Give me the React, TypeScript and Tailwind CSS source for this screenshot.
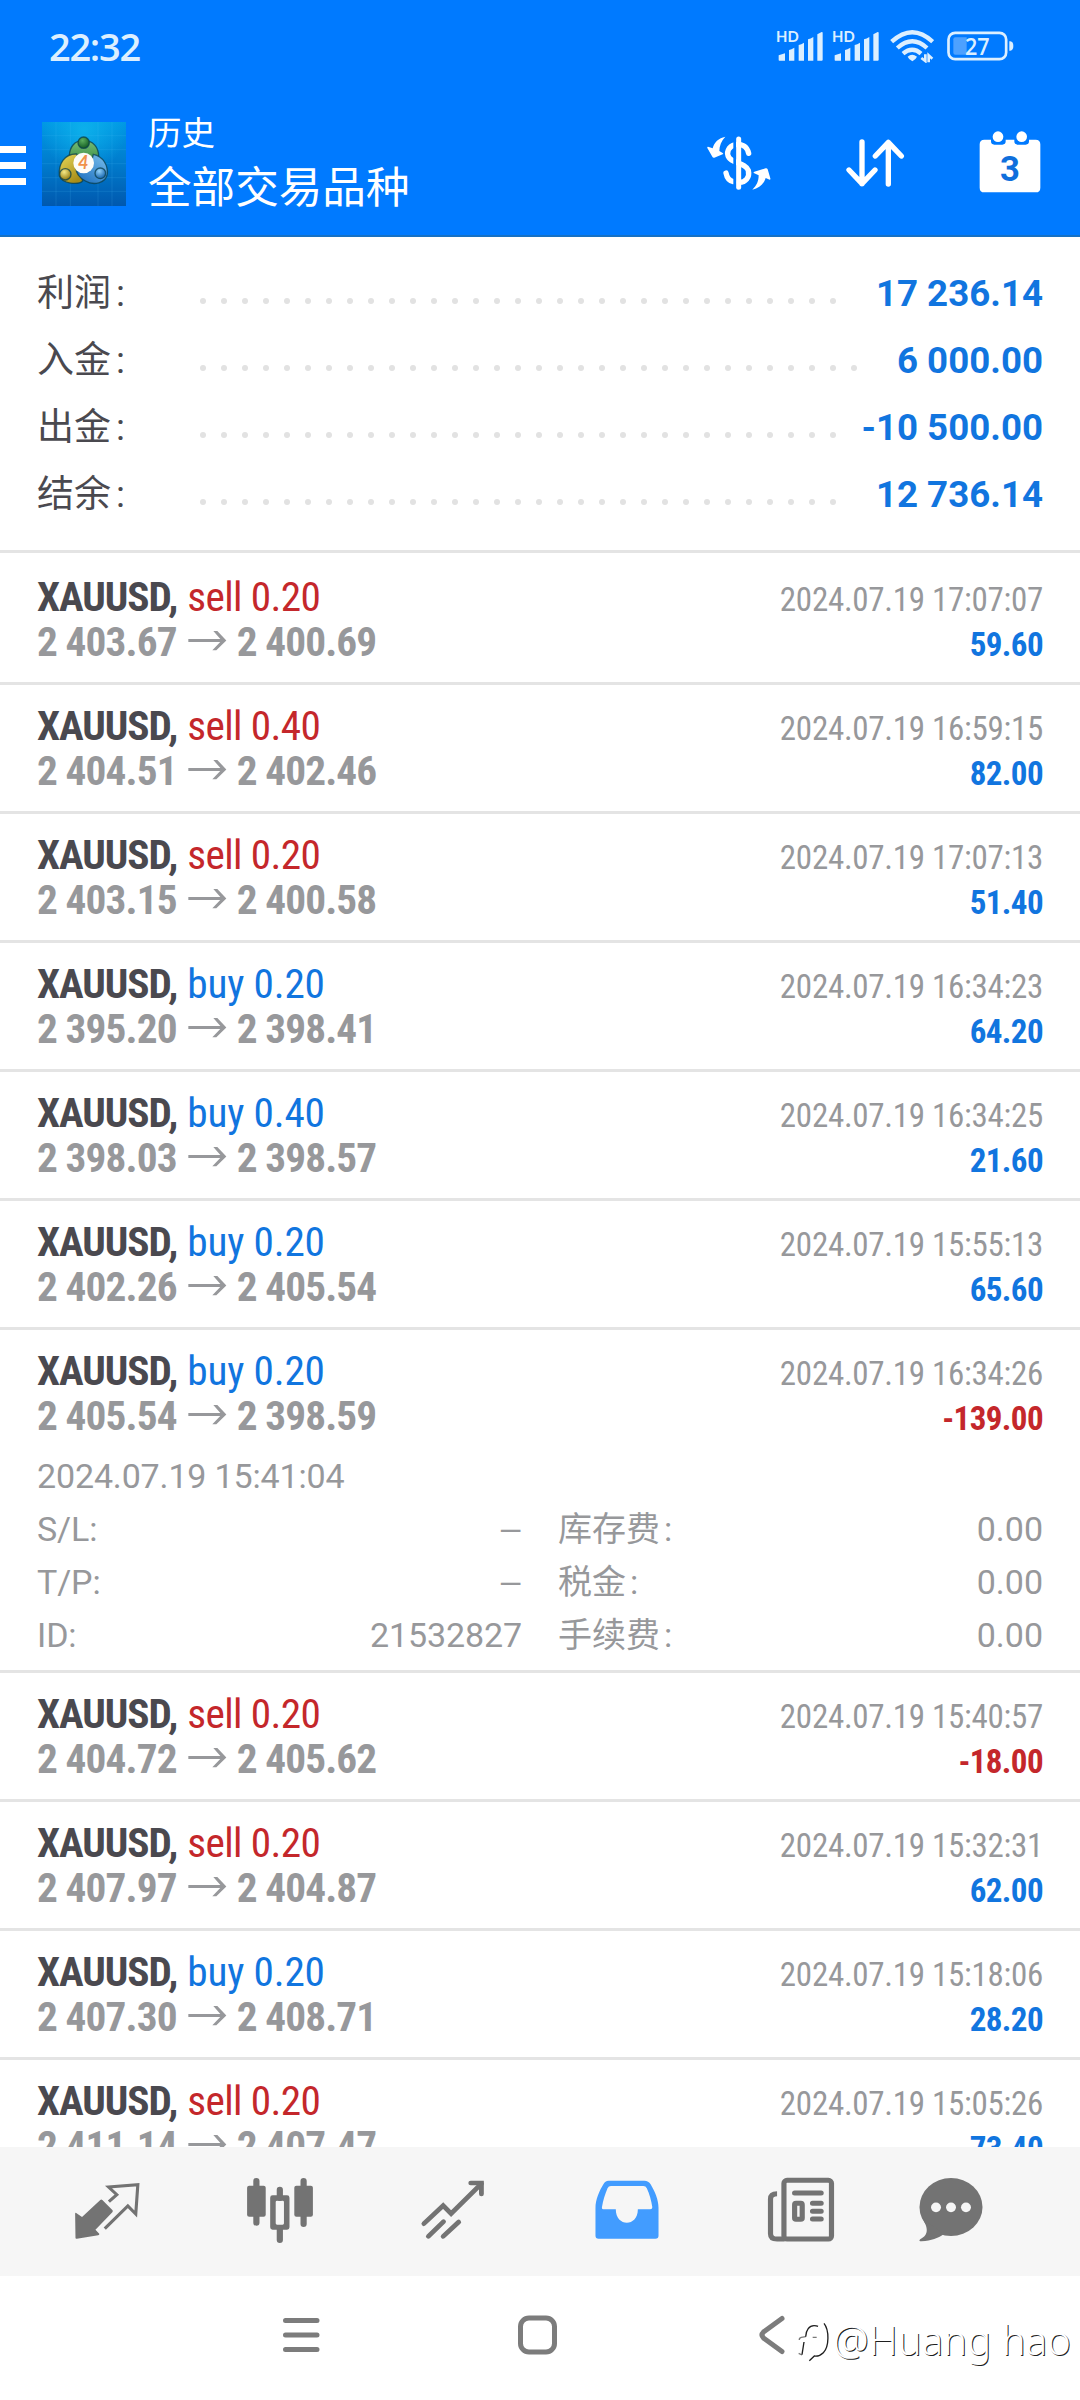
type Trade = {
  side: 'sell' | 'buy';
  volume: string;
  open: string;
  close: string;
  time: string;
  profit: string;
};

const TRADES: Trade[] = [
  { side: 'sell', volume: '0.20', open: '2 403.67', close: '2 400.69', time: '2024.07.19 17:07:07', profit: '59.60' },
  { side: 'sell', volume: '0.40', open: '2 404.51', close: '2 402.46', time: '2024.07.19 16:59:15', profit: '82.00' },
  { side: 'sell', volume: '0.20', open: '2 403.15', close: '2 400.58', time: '2024.07.19 17:07:13', profit: '51.40' },
  { side: 'buy', volume: '0.20', open: '2 395.20', close: '2 398.41', time: '2024.07.19 16:34:23', profit: '64.20' },
  { side: 'buy', volume: '0.40', open: '2 398.03', close: '2 398.57', time: '2024.07.19 16:34:25', profit: '21.60' },
  { side: 'buy', volume: '0.20', open: '2 402.26', close: '2 405.54', time: '2024.07.19 15:55:13', profit: '65.60' },
  { side: 'buy', volume: '0.20', open: '2 405.54', close: '2 398.59', time: '2024.07.19 16:34:26', profit: '-139.00' },
  { side: 'sell', volume: '0.20', open: '2 404.72', close: '2 405.62', time: '2024.07.19 15:40:57', profit: '-18.00' },
  { side: 'sell', volume: '0.20', open: '2 407.97', close: '2 404.87', time: '2024.07.19 15:32:31', profit: '62.00' },
  { side: 'buy', volume: '0.20', open: '2 407.30', close: '2 408.71', time: '2024.07.19 15:18:06', profit: '28.20' },
  { side: 'sell', volume: '0.20', open: '2 411.14', close: '2 407.47', time: '2024.07.19 15:05:26', profit: '73.40' },
];

const EXPANDED = 6;

const SUMMARY = [
  { label: '利润', value: '17 236.14', dots: 31 },
  { label: '入金', value: '6 000.00', dots: 32 },
  { label: '出金', value: '-10 500.00', dots: 31 },
  { label: '结余', value: '12 736.14', dots: 31 },
];

const DETAILS = [
  { key: 'S/L:', value: '—', label: '库存费', amount: '0.00' },
  { key: 'T/P:', value: '—', label: '税金', amount: '0.00' },
  { key: 'ID:', value: '21532827', label: '手续费', amount: '0.00' },
];

function Signal() {
  return (
    <svg className="h-[32px] w-[47px] overflow-visible" viewBox="286 92 141 96" fill="#dcefff">
      <text x="286" y="129" fontSize="45" fontWeight="700" fontFamily="Lato, sans-serif" textLength="68" lengthAdjust="spacingAndGlyphs">HD</text>
      <path d="M294 168 L313 162 V184 H296 Q294 184 294 181Z" />
      <path d="M325 152 Q332 150 341 145 V184 H325Z" />
      <path d="M354 137 Q362 135 370 130 V184 H354Z" />
      <path d="M382 120 Q390 118 398 113 V184 H382Z" />
      <path d="M410 105 Q418 101 423 98 Q426 97 426 101 V181 Q426 184 423 184 H410Z" />
    </svg>
  );
}

function Wifi() {
  return (
    <svg className="h-[34px] w-[44px]" viewBox="629 90 132 102" fill="none" stroke="#dcefff" strokeWidth="13">
      <path d="M634 128 Q696 71 757 128" />
      <path d="M651 147 Q696 107 740 147" />
      <path d="M668 164 Q696 141 722 164" />
      <path d="M682 173 Q695 162 710 173 Q706 182 696 187 Q686 182 682 173Z" fill="#dcefff" stroke="none" />
      <path d="M735 166 V186 L723 177 M745 190 V169 L756 179" strokeWidth="8" />
    </svg>
  );
}

function Battery() {
  return (
    <svg className="h-[30px] w-[67px] overflow-visible" viewBox="801 94 201 90" fill="none">
      <rect x="805.500" y="99.500" width="173" height="79" rx="20" stroke="#dcefff" strokeWidth="8" />
      <path d="M988 125 H991 Q1000 126 1000 139 Q1000 152 991 153 H988Z" fill="#dcefff" />
      <path d="M826 113 H860 V165 H826 Q820 165 820 159 V119 Q820 113 826 113Z" fill="#4da1ff" />
      <text x="855" y="165" fontSize="69" fontWeight="600" fontFamily="'Open Sans', sans-serif" textLength="74" lengthAdjust="spacingAndGlyphs" fill="#dcefff">27</text>
    </svg>
  );
}

function Logo() {
  return (
    <svg className="h-[84px] w-[84px]" viewBox="36 21 252 252">
      <defs>
        <linearGradient id="bg" x1="0" y1="0" x2="0" y2="1">
          <stop offset="0" stopColor="#0099e4" />
          <stop offset="0.5" stopColor="#007bcc" />
          <stop offset="1" stopColor="#0058ae" />
        </linearGradient>
        <radialGradient id="glow" cx="0.5" cy="0.1" r="0.5">
          <stop offset="0" stopColor="#12bcf0" stopOpacity="0.7" />
          <stop offset="1" stopColor="#12bcf0" stopOpacity="0" />
        </radialGradient>
        <linearGradient id="green" x1="0" y1="0" x2="0" y2="1">
          <stop offset="0" stopColor="#76bd76" />
          <stop offset="1" stopColor="#267c34" />
        </linearGradient>
        <linearGradient id="yellow" x1="0" y1="0" x2="0.6" y2="1">
          <stop offset="0" stopColor="#e8da5c" />
          <stop offset="1" stopColor="#a88d18" />
        </linearGradient>
        <linearGradient id="blue" x1="1" y1="0" x2="0.3" y2="1">
          <stop offset="0" stopColor="#7cc1ee" />
          <stop offset="1" stopColor="#2274c2" />
        </linearGradient>
        <radialGradient id="greenBall" cx="0.4" cy="0.3" r="0.7">
          <stop offset="0" stopColor="#5cae5e" />
          <stop offset="1" stopColor="#125c24" />
        </radialGradient>
        <radialGradient id="yellowBall" cx="0.4" cy="0.3" r="0.7">
          <stop offset="0" stopColor="#f5e986" />
          <stop offset="1" stopColor="#957c10" />
        </radialGradient>
        <radialGradient id="blueBall" cx="0.4" cy="0.3" r="0.7">
          <stop offset="0" stopColor="#93d2fa" />
          <stop offset="1" stopColor="#1463ad" />
        </radialGradient>
      </defs>
      <rect x="36" y="21" width="252" height="252" fill="url(#bg)" />
      <rect x="36" y="21" width="252" height="252" fill="url(#glow)" />
      <path d="M36 62 H288 M36 104 H288 M36 146 H288 M36 188 H288 M36 229 H288 M78 21 V273 M121 21 V273 M204 21 V273 M246 21 V273" stroke="#5cc8ff" strokeOpacity="0.22" strokeWidth="2" />
      <g stroke="#0a3f4c" strokeOpacity="0.75" strokeWidth="4">
        <path d="M161 76 C190 76 206 98 206 124 C206 140 198 156 186 164 L134 160 C122 150 117 136 118 122 C119 96 134 76 161 76Z" fill="url(#green)" />
        <path d="M88 182 C85 146 104 116 140 117 L150 160 L158 198 C146 210 96 208 88 182Z" fill="url(#yellow)" />
        <path d="M190 118 C220 124 234 152 232 176 C228 206 190 212 166 198 C148 188 138 172 138 158 L178 166Z" fill="url(#blue)" />
        <circle cx="161" cy="83" r="17" fill="url(#greenBall)" />
        <circle cx="106" cy="178" r="17" fill="url(#yellowBall)" />
        <circle cx="211" cy="175" r="16" fill="url(#blueBall)" />
      </g>
      <circle cx="161" cy="144" r="31" fill="#fdfcf8" />
      <text x="160" y="163" textAnchor="middle" fontSize="54" fontWeight="700" fontStyle="italic" fontFamily="Lato, sans-serif" fill="#f0924a">4</text>
    </svg>
  );
}

function CurrencyIcon() {
  return (
    <svg className="h-[60px] w-[66px]" viewBox="80 400 198 180" fill="#fff">
      <g fill="none" stroke="#fff" strokeWidth="16" strokeLinecap="round">
        <path d="M208 461 C203 438 186 432 168 435 C146 440 140 460 149 474 C158 490 200 490 207 512 C212 534 198 548 180 548" />
        <path d="M140 520 C143 536 152 544 162 546" />
      </g>
      <path d="M166 405 V575" stroke="#007aff" strokeWidth="8" />
      <path d="M178 418 V563" stroke="#fff" strokeWidth="15" strokeLinecap="round" />
      <path d="M138 411 C118 415 104 428 100 446 L86 441 Q83 441 84 445 L99 471 Q101 475 105 474 L130 464 Q134 462 130 460 L120 454 C120 438 126 424 138 411Z" />
      <path d="M219 570 C240 565 254 552 259 535 L271 540 Q274 540 273 536 L265 509 Q263 505 259 506 L225 516 Q220 519 225 521 L238 527 C238 545 232 558 219 570Z" />
    </svg>
  );
}

function SortIcon() {
  return (
    <svg className="h-[50px] w-[60px]" viewBox="496 415 180 150" fill="none" stroke="#fff" strokeWidth="16" strokeLinecap="round" strokeLinejoin="round">
      <path d="M547 427 V552 M508 511 L547 552 L586 511" />
      <path d="M626 553 V428 M587 469 L626 428 L665 469" />
    </svg>
  );
}

function CalendarIcon() {
  return (
    <svg className="h-[62px] w-[62px]" viewBox="898 394 186 186" fill="#fff">
      <path d="M914 420 H934 V425 Q934 435 944 435 H968 Q978 435 978 425 V420 H1004 V425 Q1004 435 1014 435 H1038 Q1048 435 1048 425 V420 H1068 Q1082 420 1082 434 V564 Q1082 578 1068 578 H914 Q900 578 900 564 V434 Q900 420 914 420Z" />
      <circle cx="955" cy="411" r="16" />
      <circle cx="1026" cy="411" r="16" />
      <text x="991" y="544" textAnchor="middle" fontSize="104" fontWeight="700" fontFamily="Roboto, sans-serif" fill="#0f6fdc">3</text>
    </svg>
  );
}

function ArrowRight() {
  return (
    <svg className="ml-[11px] h-[21px] w-[39px] -translate-y-[5px]" viewBox="564 238 117 63" fill="none" stroke="#97989b">
      <path d="M565 269.500 H672" strokeWidth="9" />
      <path d="M640 241 L652 241 L679 269.500 L649 299 L637 299 L665 269.500Z" fill="#97989b" stroke="none" />
    </svg>
  );
}

function TradeRow({ trade }: { trade: Trade }) {
  return (
    <div className="pt-[19px] font-['Roboto_Condensed','Roboto',sans-serif] leading-[45px] text-[#97989b]">
      <div className="flex h-[45px] items-baseline whitespace-pre">
        <span className="text-[41.25px] font-bold tracking-[-1.05px] text-[#4a494f]">XAUUSD,</span>
        {trade.side === 'sell' ? (
          <span className="ml-[10px] text-[41.25px] tracking-[-0.61px] text-[#c4272b]">sell {trade.volume}</span>
        ) : (
          <span className="ml-[10px] text-[41.25px] tracking-[-0.18px] text-[#1175df]">buy {trade.volume}</span>
        )}
        <span className="ml-auto text-[33px] tracking-[-0.28px]">{trade.time}</span>
      </div>
      <div className="flex h-[45px] items-baseline whitespace-pre">
        <span className="text-[41.25px] font-bold tracking-[-0.87px]">{trade.open}</span>
        <ArrowRight />
        <span className="ml-[10px] text-[41.25px] font-bold tracking-[-0.87px]">{trade.close}</span>
        <span
          className={
            trade.profit.startsWith('-')
              ? 'ml-auto text-[33px] font-bold tracking-[-0.6px] text-[#c4272b]'
              : 'ml-auto text-[33px] font-bold tracking-[-0.6px] text-[#1175df]'
          }
        >
          {trade.profit}
        </span>
      </div>
    </div>
  );
}

function TradeDetails() {
  return (
    <div className="mt-[11px] h-[220px] text-[34px] leading-[53px] text-[#97989b]">
      <div className="h-[50px] tracking-[-0.15px]">2024.07.19 15:41:04</div>
      {DETAILS.map((d) => (
        <div key={d.key} className="flex h-[53px] items-baseline">
          <div className="flex w-[485px] items-baseline justify-between tracking-[-0.1px]">
            <span>{d.key}</span>
            <span className={d.value === '—' ? 'text-[30px]' : ''}>{d.value}</span>
          </div>
          <div className="ml-[36px] flex flex-1 items-baseline justify-between">
            <span>
              <span className="font-['Noto_Sans_CJK_SC',sans-serif]">{d.label}</span>
              <span className="ml-[4px]">:</span>
            </span>
            <span>{d.amount}</span>
          </div>
        </div>
      ))}
    </div>
  );
}

function Summary() {
  return (
    <section className="h-[316px] border-b-[3px] border-[#e4e4e4] pt-[20px] pr-[37px] pl-[37px]">
      {SUMMARY.map((s) => (
        <div key={s.label} className="flex h-[67px] items-baseline leading-[67px]">
          <span className="w-[162px] text-[37px] text-[#4a494f]">
            <span className="font-['Noto_Sans_CJK_SC',sans-serif]">{s.label}</span>
            <span className="ml-[5px]">:</span>
          </span>
          <span className="ml-[1px] flex -translate-y-[2px] gap-[15px]">
            {Array.from({ length: s.dots }, (_, i) => (
              <i key={i} className="block size-[6px] rounded-full bg-[#e2e2e2]" />
            ))}
          </span>
          <span className="ml-auto text-[36.7px] font-bold whitespace-pre text-[#1175df]">{s.value}</span>
        </div>
      ))}
    </section>
  );
}

function TabBar() {
  return (
    <nav className="flex h-[129px] shrink-0 items-start bg-[#f6f6f6] pt-[28px] pl-[20px]">
      <div className="flex w-[173.4px] justify-center">
        <svg className="h-[70px] w-[72px]" viewBox="208 406 209 210" preserveAspectRatio="none">
          <path d="M223 520 L240 532 L293 481 Q296 478 299 481 L328 511 Q331 514 328 518 L279 570 L290 582 Q291 586 287 587 L225 597 Q221 598 221 594 L220 523 Q220 518 223 520Z" fill="#737373" />
          <path d="M318 486 L341 465 L317 442 L402 435 L396 523 L373 499 L306 567" fill="none" stroke="#737373" strokeWidth="9" />
        </svg>
      </div>
      <div className="flex w-[173.4px] justify-center">
        <svg className="h-[70px] w-[72px]" viewBox="709 406 209 210" preserveAspectRatio="none" fill="#737373">
          <path d="M745 424 V549 M882 424 V553 M813 450 V475 M813 565 V601" stroke="#737373" strokeWidth="18" strokeLinecap="round" />
          <rect x="718" y="438" width="54" height="93" rx="6" />
          <rect x="855" y="438" width="54" height="93" rx="6" />
          <path d="M792 467 H834 Q841 467 841 474 V563 Q841 570 834 570 H792 Q785 570 785 563 V474 Q785 467 792 467Z M805 483 Q801 483 801 487 V551 Q801 555 805 555 H821 Q825 555 825 551 V487 Q825 483 821 483Z" fillRule="evenodd" />
        </svg>
      </div>
      <div className="flex w-[173.4px] justify-center">
        <svg className="h-[70px] w-[72px]" viewBox="1212 406 209 210" preserveAspectRatio="none" fill="none" stroke="#737373" strokeWidth="14" strokeLinecap="round">
          <path d="M1232 552 L1288 498 L1311 522 L1399 432" />
          <path d="M1368 430 H1399 V463" />
          <path d="M1245 590 L1289 546 M1288 590 L1333 547" />
        </svg>
      </div>
      <div className="flex w-[173.4px] justify-center">
        <svg className="h-[70px] w-[72px]" viewBox="149 406 209 210" preserveAspectRatio="none" fill="#429cff">
          <path
            fillRule="evenodd"
            d="M200 423 H304 Q316 423 322 434 C334 455 345 480 345 505 V588 Q345 597 336 597 H171 Q162 597 162 588 V505 C162 480 174 452 185 434 Q190 423 200 423Z M207 439 H301 Q308 439 311 446 C319 464 324 482 327 503 Q327 509 321 509 H285 C285 563 221 563 221 509 H187 Q179 509 181 501 C184 482 190 464 197 446 Q200 439 207 439Z"
          />
        </svg>
      </div>
      <div className="flex w-[175.4px] justify-center">
        <svg className="h-[70px] w-[72px]" viewBox="655 406 209 210" preserveAspectRatio="none" fill="none" stroke="#737373" strokeWidth="15">
          <path d="M690 462 Q671 462 671 478 V582 Q671 598 690 598 H712" />
          <rect x="710" y="422" width="138" height="176" rx="9" />
          <path d="M741 460 H818 M793 491 H818 M793 514.500 H818 M793 538 H818" strokeWidth="15" strokeLinecap="round" />
          <rect x="741" y="491" width="22" height="48" rx="4" strokeWidth="15" />
        </svg>
      </div>
      <div className="flex w-[125px] justify-center">
        <svg className="h-[70px] w-[72px]" viewBox="1089 406 209 210" preserveAspectRatio="none" fill="#737373">
          <ellipse cx="1193.500" cy="502" rx="91.500" ry="87" />
          <path d="M1110 535 C1132 572 1124 588 1104 599 Q1098 605 1108 605 C1138 603 1155 596 1172 584Z" />
          <circle cx="1150" cy="503" r="14.500" fill="#f6f6f6" />
          <circle cx="1193.500" cy="503" r="14.500" fill="#f6f6f6" />
          <circle cx="1237" cy="503" r="14.500" fill="#f6f6f6" />
        </svg>
      </div>
    </nav>
  );
}

function SystemBar() {
  return (
    <div className="relative flex h-[124px] shrink-0 items-start bg-white pt-[39px]">
      <svg className="ml-[282px] h-[40px] w-[38px]" viewBox="0 0 38 40" stroke="#7c7c7c" strokeWidth="5" strokeLinecap="round">
        <path d="M3.500 5.500 H35 M3.500 20 H35 M3.500 34.500 H35" />
      </svg>
      <svg className="ml-[197px] h-[40px] w-[40px]" viewBox="0 0 40 40" fill="none" stroke="#7c7c7c" strokeWidth="5">
        <rect x="3.500" y="3" width="34" height="34" rx="8.500" />
      </svg>
      <svg className="ml-[201px] h-[40px] w-[28px]" viewBox="0 0 28 40" fill="none" stroke="#7c7c7c" strokeWidth="5" strokeLinecap="round">
        <path d="M24 3.500 L5.500 17 Q2.500 20 5.500 23 L24 36.500" />
      </svg>
      <div className="absolute top-[38px] left-[794px] flex items-center">
        <svg className="mt-[6px] h-[46px] w-[38px]" viewBox="42 36 114 138" fill="none" stroke="#1f1f1f" strokeWidth="4">
          <path d="M58 96 Q57 90 64 88 L77 86" strokeOpacity="0.6" />
          <path d="M77 86 C78 66 88 53 102 53 Q110 53 114 55" />
          <path d="M132 46 C148 66 148 116 130 134 Q118 146 103 144 L88 158" />
          <path d="M72 102 L66 140" />
          <path d="M56 136 L66 141 M98 88 H110" strokeOpacity="0.6" />
        </svg>
        <span className="ml-[1px] font-['Noto_Sans',sans-serif] text-[40px] leading-[46px] font-light tracking-[0.1px] whitespace-pre text-white [text-shadow:1px_1px_0px_rgba(0,0,0,0.9)]">@Huang hao</span>
      </div>
    </div>
  );
}

export default function App() {
  return (
    <div className="flex h-[2400px] w-[1080px] flex-col overflow-hidden bg-white font-['Roboto','Noto_Sans_CJK_SC',sans-serif]">
      <header className="h-[237px] shrink-0 border-b-2 border-[#1671c4] bg-[#007aff] text-white">
        <div className="flex h-[92px] items-center pl-[49px]">
          <span className="font-['Open_Sans',sans-serif] text-[38px] leading-[92px] font-semibold tracking-[-1.3px] text-[#dcefff]">22:32</span>
          <div className="ml-auto flex items-center pr-[66px]">
            <Signal />
            <div className="ml-[9px]">
              <Signal />
            </div>
            <div className="ml-[11px]">
              <Wifi />
            </div>
            <div className="ml-[13px]">
              <Battery />
            </div>
          </div>
        </div>
        <div className="flex h-[143px] items-start">
          <div className="mt-[54px] flex w-[26px] flex-col gap-[9px]">
            <i className="block h-[7px] bg-white" />
            <i className="block h-[7px] bg-white" />
            <i className="block h-[7px] bg-white" />
          </div>
          <div className="mt-[30px] ml-[16px]">
            <Logo />
          </div>
          <div className="mt-[16px] ml-[22px] font-['Noto_Sans_CJK_SC',sans-serif]">
            <div className="text-[33.500px] leading-[45px]">历史</div>
            <div className="mt-[3px] text-[43.600px] leading-[56px]">全部交易品种</div>
          </div>
          <div className="mr-[19px] ml-auto flex items-start">
            <div className="mt-[41px]">
              <CurrencyIcon />
            </div>
            <div className="mt-[46px] ml-[73px]">
              <SortIcon />
            </div>
            <div className="mt-[39px] ml-[74px] mr-[20px]">
              <CalendarIcon />
            </div>
          </div>
        </div>
      </header>

      <main className="min-h-0 flex-1 overflow-hidden">
        <Summary />
        <ul className="pt-[3px]">
          {TRADES.map((t, i) => (
            <li key={t.time} className="min-h-[129px] border-b-[3px] border-[#e4e4e4] px-[37px]">
              <TradeRow trade={t} />
              {i === EXPANDED && <TradeDetails />}
            </li>
          ))}
        </ul>
      </main>

      <TabBar />
      <SystemBar />
    </div>
  );
}
